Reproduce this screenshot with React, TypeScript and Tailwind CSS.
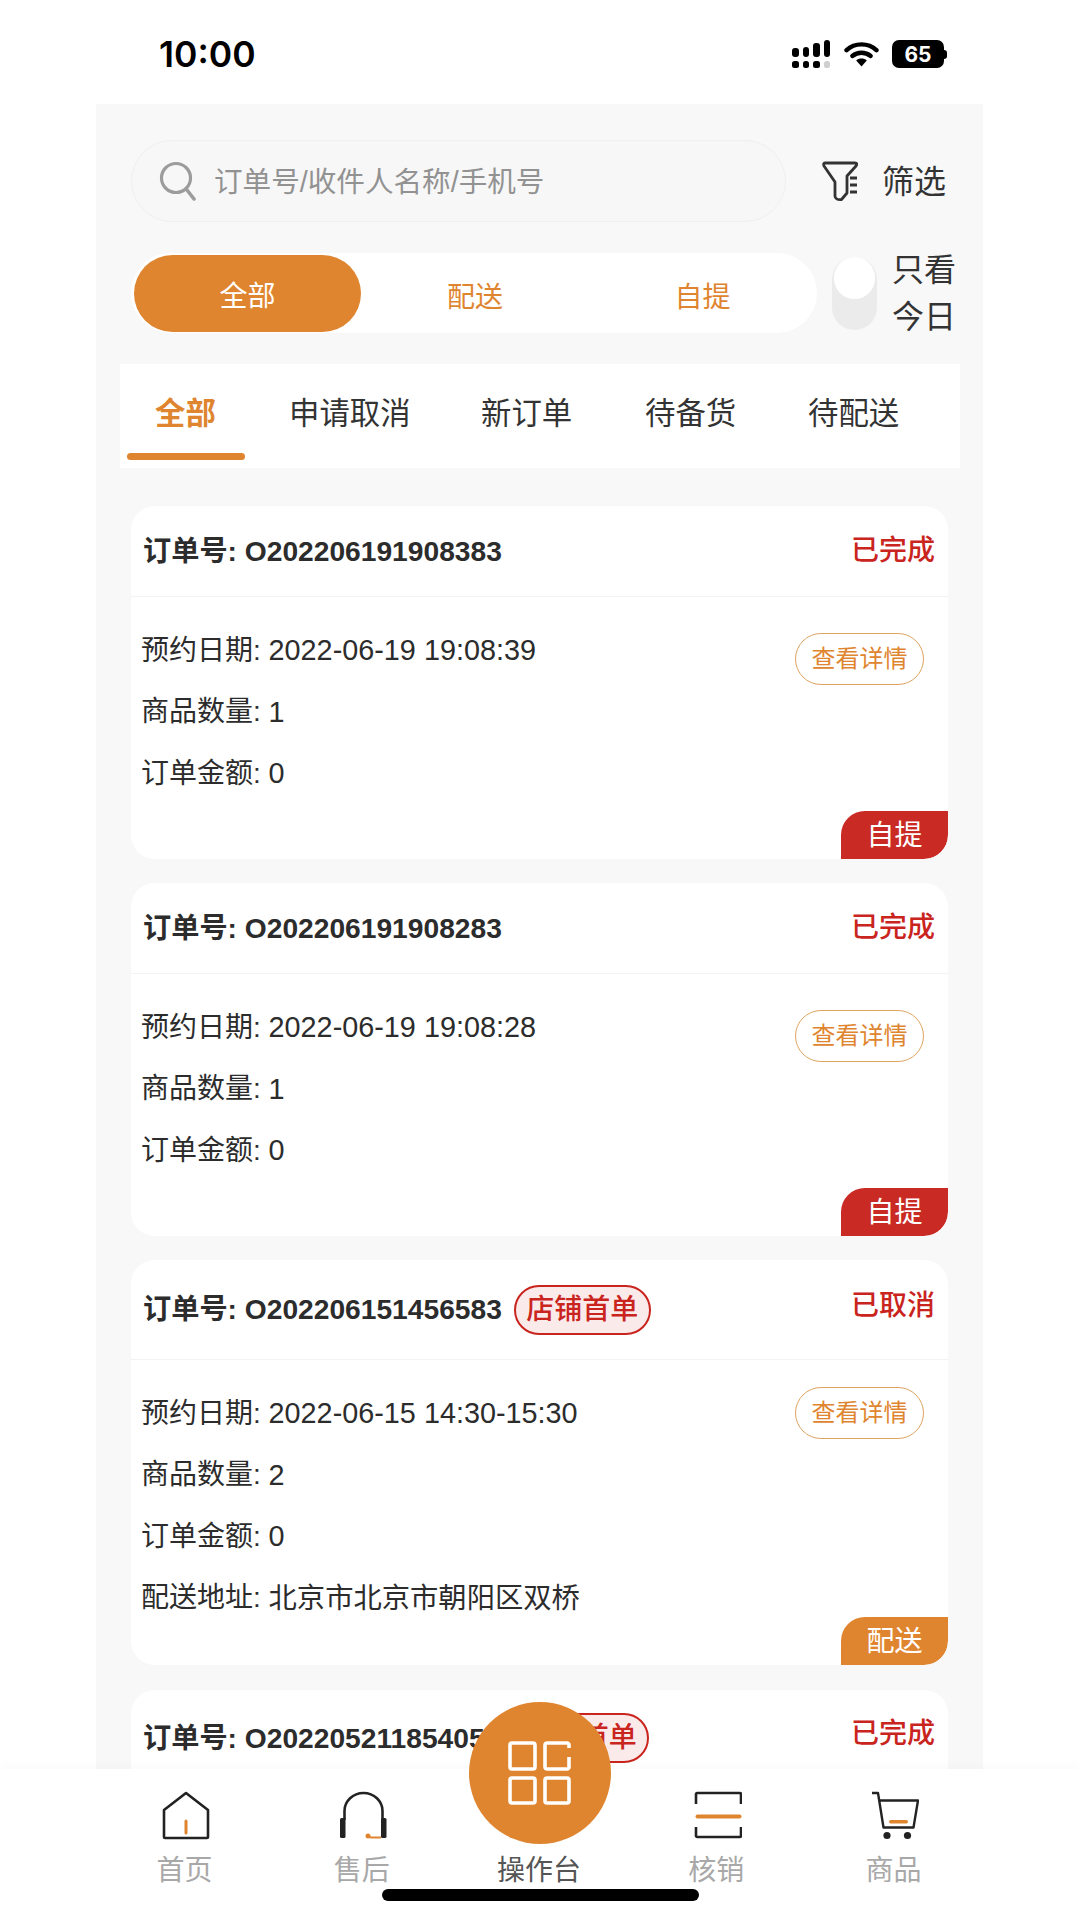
import React from "react";

const font = { fontFamily: '"Liberation Sans","Noto Sans CJK SC",sans-serif' };

function Signal() {
  const tops = [9, 10, 14, 17];
  return (
    <div className="flex gap-[4px] items-end w-[38px] h-[28px]">
      {tops.map((t, i) => (
        <div key={i} className="flex flex-col justify-end gap-[4px] w-[6.5px] h-[28px]">
          <div className="bg-black rounded-[3px] w-full" style={{ height: t }} />
          <div className={(i === 3 ? "bg-[#cfcfcf]" : "bg-black") + " rounded-[2.5px] w-full h-[7px]"} />
        </div>
      ))}
    </div>
  );
}

function Wifi() {
  return (
    <svg width="35" height="27" viewBox="0 0 36 28" fill="none">
      <path d="M2.5 9.5C11 1.5 25 1.5 33.5 9.5" stroke="#000" strokeWidth="4.6" strokeLinecap="round" />
      <path d="M8.5 15.5C14 11 22 11 27.5 15.5" stroke="#000" strokeWidth="4.6" strokeLinecap="round" />
      <path d="M12.5 20.2C15.5 17.6 20.5 17.6 23.5 20.2L18 26.5Z" fill="#000" />
    </svg>
  );
}

function SearchIcon() {
  return (
    <svg width="38" height="40" viewBox="0 0 38 40" fill="none">
      <circle cx="17" cy="17" r="14.5" stroke="#9c9c9c" strokeWidth="3.2" />
      <path d="M28 29L35 38" stroke="#9c9c9c" strokeWidth="3.6" strokeLinecap="round" />
    </svg>
  );
}

function FilterIcon() {
  return (
    <svg width="36" height="42" viewBox="0 0 36 42" fill="none">
      <path d="M3 3H33Q36 3 34 6L25 16V33L19.5 39.5Q13 40 13 36V22L2 6Q1 3 3 3Z" stroke="#333" strokeWidth="2.8" strokeLinejoin="round" />
      <path d="M28 18H35M28 25H35M28 32H35" stroke="#333" strokeWidth="2.8" />
    </svg>
  );
}

function HomeIcon() {
  return (
    <svg width="50" height="50" viewBox="0 0 50 50" fill="none">
      <path d="M3 20L25 3L47 20V46.8a1.2 1.2 0 0 1-1.2 1.2H4.2A1.2 1.2 0 0 1 3 46.8Z" stroke="#222" strokeWidth="2.6" strokeLinejoin="round" />
      <path d="M25 31V43" stroke="#e0852f" strokeWidth="3" strokeLinecap="round" />
    </svg>
  );
}

function HeadsetIcon() {
  return (
    <svg width="50" height="50" viewBox="0 0 50 50" fill="none">
      <path d="M6.5 30V21A19 18 0 0 1 44.5 21V30" stroke="#222" strokeWidth="2.6" />
      <rect x="2" y="28" width="5.5" height="20" rx="1.5" fill="#222" />
      <rect x="43" y="28" width="5.5" height="20" rx="1.5" fill="#222" />
      <circle cx="30" cy="46" r="2.5" fill="#e0852f" />
      <path d="M30 46.5L33 47.5H43" stroke="#e0852f" strokeWidth="2" />
    </svg>
  );
}

function ScanIcon() {
  return (
    <svg width="50" height="50" viewBox="0 0 50 50" fill="none">
      <path d="M4 14V4.2A1.2 1.2 0 0 1 5.2 3H47.8A1.2 1.2 0 0 1 49 4.2V14" stroke="#222" strokeWidth="2.6" />
      <path d="M4 37V45.8A1.2 1.2 0 0 0 5.2 47H47.8A1.2 1.2 0 0 0 49 45.8V37" stroke="#222" strokeWidth="2.6" />
      <rect x="3.5" y="24.5" width="46" height="4" rx="2" fill="#e0852f" />
    </svg>
  );
}

function CartIcon() {
  return (
    <svg width="50" height="50" viewBox="0 0 50 50" fill="none">
      <path d="M3 3H9L14.5 37.5H44.5L49 10.5H11" stroke="#222" strokeWidth="2.4" strokeLinejoin="round" />
      <rect x="20" y="30" width="19" height="3.4" rx="1.7" fill="#e0852f" />
      <circle cx="18" cy="45.5" r="3.6" fill="#222" />
      <circle cx="38.5" cy="45.5" r="3.6" fill="#222" />
    </svg>
  );
}

function GridIcon() {
  return (
    <svg width="64" height="64" viewBox="0 0 64 64" fill="none">
      <rect x="2" y="2" width="25" height="26" rx="2" stroke="#fff" strokeWidth="3.6" />
      <path d="M61 7V4C61 3 60 2 59 2H39C38 2 37 3 37 4V26C37 27 38 28 39 28H59C60 28 61 27 61 26V16" stroke="#fff" strokeWidth="3.6" />
      <rect x="2" y="37" width="25" height="25" rx="2" stroke="#fff" strokeWidth="3.6" />
      <rect x="37" y="37" width="24" height="25" rx="2" stroke="#fff" strokeWidth="3.6" />
    </svg>
  );
}

type Order = {
  no: string;
  status: string;
  rows: [string, string][];
  address?: string;
  tag: string;
  tagRed: boolean;
  first?: boolean;
  headH: string;
  cardH: string;
};

const orders: Order[] = [
  { no: "O202206191908383", status: "已完成", rows: [["预约日期", "2022-06-19 19:08:39"], ["商品数量", "1"], ["订单金额", "0"]], tag: "自提", tagRed: true, headH: "h-[91px]", cardH: "h-[353px]" },
  { no: "O202206191908283", status: "已完成", rows: [["预约日期", "2022-06-19 19:08:28"], ["商品数量", "1"], ["订单金额", "0"]], tag: "自提", tagRed: true, headH: "h-[91px]", cardH: "h-[353px]" },
  { no: "O202206151456583", status: "已取消", rows: [["预约日期", "2022-06-15 14:30-15:30"], ["商品数量", "2"], ["订单金额", "0"]], address: "北京市北京市朝阳区双桥", tag: "配送", tagRed: false, first: true, headH: "h-[100px]", cardH: "h-[405px]" },
];

function Card({ o }: { o: Order }) {
  return (
    <div className={"relative bg-white rounded-[24px] overflow-hidden shrink-0 " + o.cardH}>
      <div className={"flex items-center justify-between pl-[12px] pr-[13px] border-b border-[#f3f3f3] " + o.headH}>
        <div className="flex items-center">
          <span className="text-[28.2px] font-bold text-[#2c2c2c] leading-none">订单号: {o.no}</span>
          {o.first && <FirstTag />}
        </div>
        <span className={"text-[28px] font-medium text-[#c9241d] leading-none " + (o.first ? "-mt-[8px]" : "")}>{o.status}</span>
      </div>
      <div className="pl-[10px] pt-[23px]">
        {o.rows.map((r) => (
          <div key={r[0]} className="h-[61.5px] flex items-center text-[28px] text-[#2c2c2c] leading-none whitespace-pre">
            <span>{r[0]}: </span>
            <span className="text-[28.8px]">{r[1]}</span>
          </div>
        ))}
        {o.address && (
          <div className="h-[61.5px] flex items-center text-[28px] text-[#2c2c2c] leading-none whitespace-pre">
            <span>配送地址: </span>
            <span className="text-[28.3px]">{o.address}</span>
          </div>
        )}
      </div>
      <div className="absolute right-[24px] top-[127px] w-[129px] h-[52px] border border-[#dda460] rounded-full flex items-center justify-center text-[24px] text-[#e0852f] leading-none">查看详情</div>
      <div className={"absolute right-0 bottom-0 w-[107px] h-[48px] rounded-tl-[24px] rounded-br-[24px] flex items-center justify-center text-[28px] text-white leading-none pt-[2px] " + (o.tagRed ? "bg-[#ca2a24]" : "bg-[#e0852f]")}>{o.tag}</div>
    </div>
  );
}

function FirstTag() {
  return (
    <span className="ml-[12px] w-[137px] h-[50px] shrink-0 rounded-full border-2 border-[#c9241d] bg-[#fbeaea] flex items-center justify-center text-[28px] font-medium text-[#c9241d] leading-none">店铺首单</span>
  );
}

const navs = [
  { icon: <HomeIcon />, label: "首页" },
  { icon: <HeadsetIcon />, label: "售后" },
  { icon: null, label: "操作台" },
  { icon: <ScanIcon />, label: "核销" },
  { icon: <CartIcon />, label: "商品" },
];

export default function App() {
  return (
    <div className="relative w-[1080px] h-[1920px] bg-white overflow-hidden flex flex-col" style={font}>
      <div className="h-[104px] shrink-0 flex items-center justify-between pl-[159px] pr-[133px] pt-[4px]">
        <span className="text-[35.5px] font-semibold text-black leading-none pt-[2px]" style={{ fontFamily: "Inter, sans-serif" }}>10:00</span>
        <div className="flex items-center">
          <Signal />
          <div className="ml-[14px]"><Wifi /></div>
          <div className="flex items-center ml-[13px]">
            <div className="w-[52px] h-[28px] bg-black rounded-[7px] flex items-center justify-center text-white text-[21px] font-bold leading-none" style={{ fontFamily: "Inter, sans-serif" }}>65</div>
            <div className="w-[3px] h-[9px] bg-black rounded-r-full" />
          </div>
        </div>
      </div>

      <div className="mx-[96px] w-[887px] h-[1665px] shrink-0 bg-[#f8f8f8] overflow-hidden flex flex-col">
        <div className="flex items-center pl-[35px] pt-[36px]">
          <div className="w-[655px] h-[82px] rounded-full border border-[#efefef] bg-[#f7f7f7] flex items-center pl-[27px]">
            <SearchIcon />
            <span className="ml-[17px] pt-[3px] text-[28.6px] text-[#929292] leading-none">订单号/收件人名称/手机号</span>
          </div>
          <div className="ml-[36px]"><FilterIcon /></div>
          <span className="ml-[24px] pt-[2px] text-[32px] text-[#333] leading-none">筛选</span>
        </div>

        <div className="flex items-center pl-[35px] mt-[31px] h-[80px]">
          <div className="w-[686px] h-[80px] bg-white rounded-full flex items-center pl-[3px] text-[28px] leading-none">
            <div className="w-[227px] h-[77px] bg-[#e0852f] rounded-full text-white flex items-center justify-center pt-[8px]">全部</div>
            <div className="w-[228px] text-[#e0852f] text-center pt-[9px]">配送</div>
            <div className="w-[227px] text-[#e0852f] text-center pt-[9px]">自提</div>
          </div>
          <div className="ml-[15px] w-[45px] h-[73px] rounded-full bg-[#ebebeb] relative">
            <div className="absolute top-0 left-[2px] w-[41px] h-[42px] rounded-full bg-white" />
          </div>
          <div className="ml-[15px] w-[66px] text-[32px] text-[#333] leading-[47px] pt-[1px]">只看<br />今日</div>
        </div>

        <div className="mx-[24px] mt-[31px] w-[840px] h-[104px] shrink-0 bg-white relative text-[30.4px] text-[#333] leading-none">
          <span className="absolute left-[35px] top-[34px] font-bold text-[#e0852f]">全部</span>
          <span className="absolute left-[169px] top-[34px]">申请取消</span>
          <span className="absolute left-[361px] top-[34px]">新订单</span>
          <span className="absolute left-[525px] top-[34px]">待备货</span>
          <span className="absolute left-[688px] top-[34px]">待配送</span>
          <div className="absolute left-[7px] top-[89px] w-[118px] h-[7px] rounded-full bg-[#e0852f]" />
        </div>

        <div className="mx-[35px] mt-[38px] flex flex-col gap-[24px]">
          {orders.map((o) => (
            <Card key={o.no} o={o} />
          ))}
          <div className="relative bg-white rounded-[24px] h-[120px] shrink-0 mt-px">
            <div className="flex items-center justify-between pl-[12px] pr-[13px] h-[96px]">
              <div className="flex items-center">
                <span className="text-[28.2px] font-bold text-[#2c2c2c] leading-none">订单号: O202205211854053</span>
                <FirstTag />
              </div>
              <span className="text-[28px] font-medium text-[#c9241d] leading-none -mt-[8px]">已完成</span>
            </div>
          </div>
        </div>
      </div>

      <div className="relative z-10 flex-1 bg-white flex px-[97px] shadow-[0_-4px_10px_rgba(0,0,0,0.02)]">
        {navs.map((n, i) => (
          <div key={n.label} className="flex-1 flex flex-col items-center pt-[21px]">
            <div className="h-[50px] flex items-center justify-center">{n.icon}</div>
            <span className={"mt-[17px] text-[28px] leading-none -translate-x-px " + (i === 2 ? "text-[#555]" : "text-[#a8a8a8]")}>{n.label}</span>
          </div>
        ))}
      </div>

      <div className="absolute z-20 left-[469px] top-[1702px] w-[142px] h-[142px] rounded-full bg-[#e0852f] flex items-center justify-center">
        <GridIcon />
      </div>
      <div className="absolute z-20 left-[382px] top-[1889px] w-[317px] h-[12px] rounded-full bg-black" />
    </div>
  );
}
